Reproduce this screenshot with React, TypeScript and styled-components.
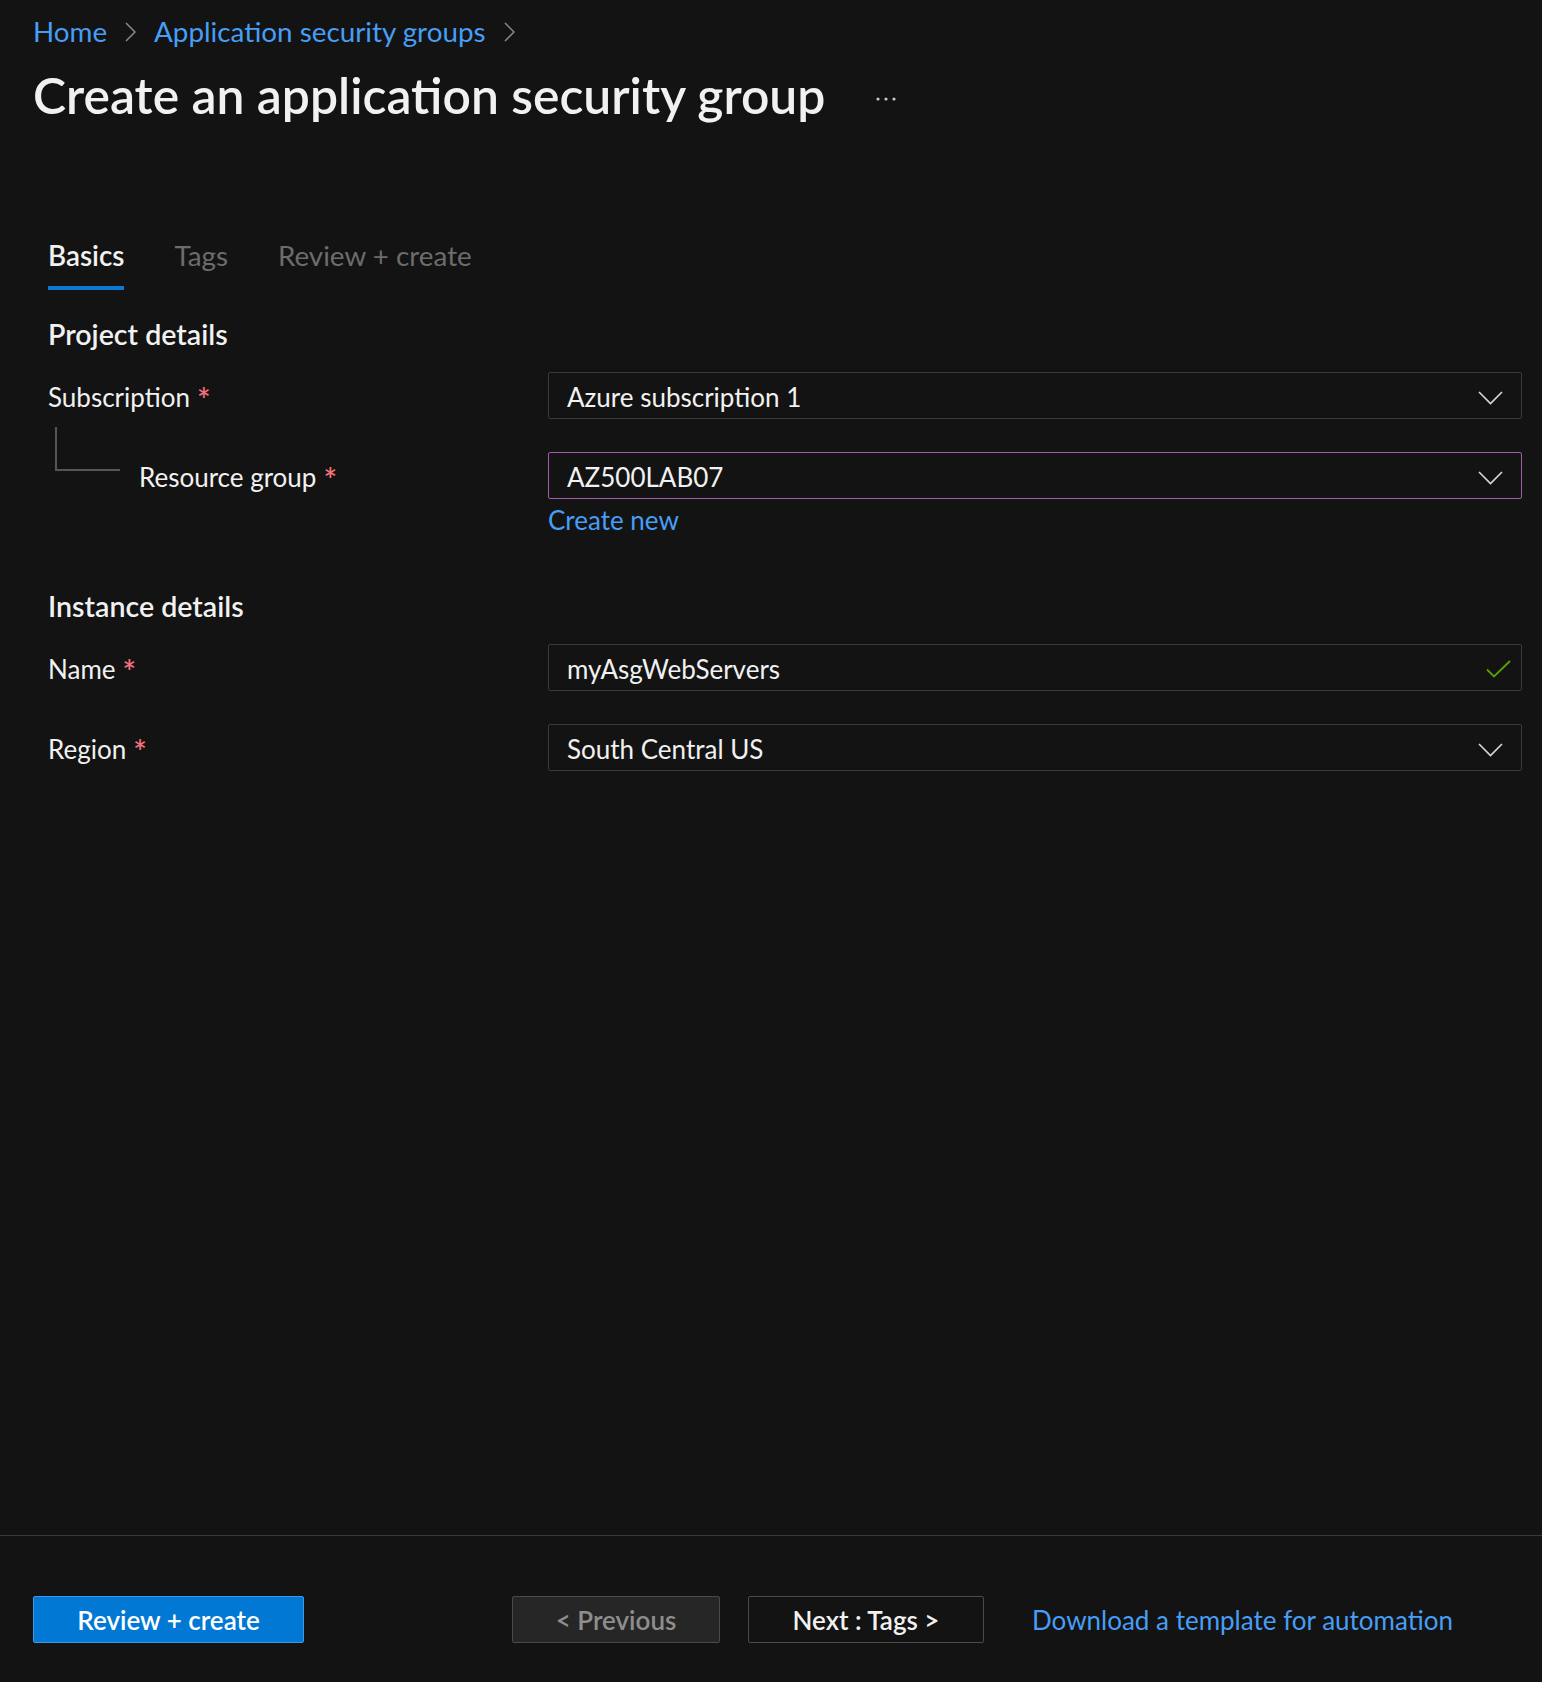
import React from "react";
import styled, { createGlobalStyle } from "styled-components";

const GlobalStyle = createGlobalStyle`
  html, body {
    margin: 0;
    padding: 0;
    background: #131313;
  }
  body {
    font-family: Lato, "Open Sans", "Liberation Sans", sans-serif;
    color: #f1f1f1;
  }
  * { box-sizing: border-box; }
`;

const Page = styled.div`
  min-height: 100vh;
  display: flex;
  flex-direction: column;
  background: #131313;
`;

const Header = styled.header`
  padding: 16px 33px 0 33px;
`;

const Breadcrumb = styled.nav`
  display: flex;
  align-items: center;
  gap: 18px;
  height: 32px;
  font-size: 27.8px;
  line-height: 32px;
`;

const Crumb = styled.a`
  color: #479ef5;
  text-decoration: none;
`;

const CrumbSep = styled.svg`
  width: 11px;
  height: 20px;
  flex: none;
`;

const TitleRow = styled.div`
  display: flex;
  align-items: center;
  gap: 50px;
  margin-top: 18px;
  height: 58px;
`;

const Title = styled.h1`
  margin: 0;
  font-size: 49.8px;
  line-height: 58px;
  font-weight: 600;
  color: #f1f1f1;
`;

const More = styled.svg`
  width: 22px;
  height: 6px;
  margin-top: 8px;
`;

const Body = styled.main`
  flex: 1;
  padding: 116px 20px 0 48px;
`;

const TabList = styled.div`
  display: flex;
  gap: 50px;
`;

const Tab = styled.div<{ $active?: boolean }>`
  font-size: 27.8px;
  line-height: 32px;
  padding-bottom: 14px;
  font-weight: ${(p) => (p.$active ? 600 : 400)};
  color: ${(p) => (p.$active ? "#f1f1f1" : "#6c6c6c")};
  border-bottom: 4px solid ${(p) => (p.$active ? "#0f78d4" : "transparent")};
`;

const SectionHeading = styled.h2<{ $gap: number }>`
  margin: ${(p) => p.$gap}px 0 0 0;
  font-size: 28.6px;
  line-height: 34px;
  font-weight: 600;
  color: #f1f1f1;
`;

const FormGrid = styled.div`
  display: grid;
  grid-template-columns: 500px 1fr;
  row-gap: 33px;
  margin-top: 21px;
`;

const Label = styled.div`
  display: flex;
  align-items: flex-start;
  height: 47px;
  padding-top: 4px;
  font-size: 26px;
  line-height: 42px;
  color: #f1f1f1;
`;

const Connector = styled.span`
  flex: none;
  width: 65px;
  height: 44px;
  margin: -29px 19px 0 7px;
  border-left: 2px solid #555555;
  border-bottom: 2px solid #555555;
`;

const Required = styled.span`
  color: #f1707b;
  margin-left: 7px;
  font-size: 32px;
  line-height: 47px;
  font-weight: 600;
`;

const Field = styled.div`
  display: flex;
  flex-direction: column;
`;

const Select = styled.div<{ $modified?: boolean }>`
  display: flex;
  align-items: flex-start;
  justify-content: space-between;
  height: 47px;
  padding: 3px 18px 0 18px;
  border: 1px solid ${(p) => (p.$modified ? "#a35ca9" : "#3a3a3a")};
  border-radius: 2px;
  background: #131313;
  font-size: 26px;
  line-height: 42px;
  color: #f1f1f1;
`;

const FieldIcon = styled.svg`
  width: 25px;
  height: 14px;
  margin-top: 15px;
  flex: none;
`;

const CheckIcon = styled.svg`
  width: 25px;
  height: 18px;
  margin-top: 12px;
  margin-right: -8px;
  flex: none;
`;

const Link = styled.a`
  color: #479ef5;
  text-decoration: none;
  font-size: 26px;
  line-height: 30px;
  margin-top: 6px;
`;

const Footer = styled.footer`
  display: flex;
  align-items: center;
  border-top: 1px solid #3a3a3a;
  padding: 60px 33px 39px 33px;
`;

const Button = styled.button<{ $variant: "primary" | "disabled" | "secondary"; $width: number }>`
  height: 47px;
  width: ${(p) => p.$width}px;
  border-radius: 2px;
  font-family: inherit;
  font-size: 26px;
  font-weight: 600;
  line-height: 30px;
  padding: 0;
  cursor: pointer;
  border: 1px solid ${(p) => (p.$variant === "primary" ? "#3f97ea" : "#4a4a4a")};
  background: ${(p) => (p.$variant === "primary" ? "#0078d4" : p.$variant === "disabled" ? "#262626" : "#131313")};
  color: ${(p) => (p.$variant === "primary" ? "#ffffff" : p.$variant === "disabled" ? "#8e8e8e" : "#f1f1f1")};
`;

const ButtonGroup = styled.div`
  display: flex;
  align-items: center;
  gap: 28px;
  margin-left: 208px;
`;

const FooterLink = styled.a`
  color: #479ef5;
  text-decoration: none;
  font-size: 26px;
  line-height: 30px;
  margin-left: 48px;
`;

const Chevron = () => (
  <FieldIcon viewBox="0 0 25 14">
    <path d="M1 1 L12.5 12.5 L24 1" fill="none" stroke="#d8d8d8" strokeWidth="1.6" />
  </FieldIcon>
);

const Check = () => (
  <CheckIcon viewBox="0 0 25 18">
    <path d="M1 9.5 L8 16.5 L24 1" fill="none" stroke="#57a300" strokeWidth="1.8" />
  </CheckIcon>
);

const Sep = () => (
  <CrumbSep viewBox="0 0 11 20">
    <path d="M1 1 L10 10 L1 19" fill="none" stroke="#8a8a8a" strokeWidth="1.5" />
  </CrumbSep>
);

export default function App() {
  return (
    <Page>
      <GlobalStyle />
      <Header>
        <Breadcrumb>
          <Crumb href="#">Home</Crumb>
          <Sep />
          <Crumb href="#">Application security groups</Crumb>
          <Sep />
        </Breadcrumb>
        <TitleRow>
          <Title>Create an application security group</Title>
          <More viewBox="0 0 22 6">
            <circle cx="3" cy="3" r="1.6" fill="#c8c8c8" />
            <circle cx="11" cy="3" r="1.6" fill="#c8c8c8" />
            <circle cx="19" cy="3" r="1.6" fill="#c8c8c8" />
          </More>
        </TitleRow>
      </Header>

      <Body>
        <TabList>
          <Tab $active>Basics</Tab>
          <Tab>Tags</Tab>
          <Tab>Review + create</Tab>
        </TabList>

        <SectionHeading $gap={27}>Project details</SectionHeading>
        <FormGrid>
          <Label>
            Subscription<Required>*</Required>
          </Label>
          <Field>
            <Select>
              <span>Azure subscription 1</span>
              <Chevron />
            </Select>
          </Field>
          <Label>
            <Connector />
            Resource group<Required>*</Required>
          </Label>
          <Field>
            <Select $modified>
              <span>AZ500LAB07</span>
              <Chevron />
            </Select>
            <Link href="#">Create new</Link>
          </Field>
        </FormGrid>

        <SectionHeading $gap={54}>Instance details</SectionHeading>
        <FormGrid>
          <Label>
            Name<Required>*</Required>
          </Label>
          <Field>
            <Select>
              <span>myAsgWebServers</span>
              <Check />
            </Select>
          </Field>
          <Label>
            Region<Required>*</Required>
          </Label>
          <Field>
            <Select>
              <span>South Central US</span>
              <Chevron />
            </Select>
          </Field>
        </FormGrid>
      </Body>

      <Footer>
        <Button $variant="primary" $width={271}>Review + create</Button>
        <ButtonGroup>
          <Button $variant="disabled" $width={208}>&lt; Previous</Button>
          <Button $variant="secondary" $width={236}>Next : Tags &gt;</Button>
        </ButtonGroup>
        <FooterLink href="#">Download a template for automation</FooterLink>
      </Footer>
    </Page>
  );
}
